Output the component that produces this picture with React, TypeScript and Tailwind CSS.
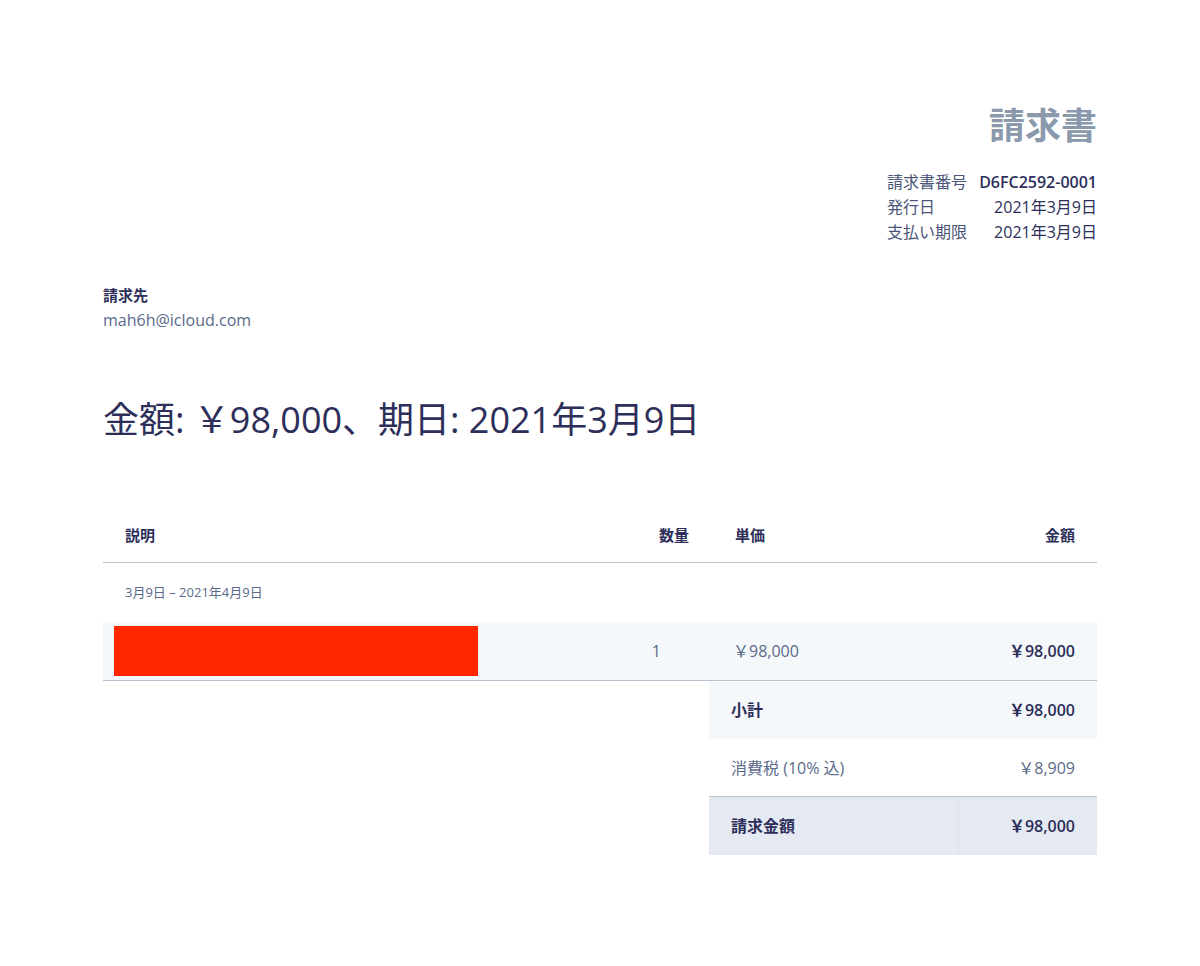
const font = { fontFamily: '"Open Sans", "Noto Sans CJK JP", sans-serif' };

export default function App() {
  return (
    <div className="w-[1200px] h-[966px] bg-white text-[#2d2f5a]" style={font}>
      <div className="px-[103px] pt-[100px] w-[1200px]">
        <div className="flex flex-col items-end">
          <div className="text-[36px] leading-[52px] font-semibold text-[#8a99ac]">請求書</div>
          <div className="mt-[18px] grid grid-cols-[auto_auto] gap-x-3 text-[16px] leading-[25px]">
            <span className="text-[#4a5578]">請求書番号</span>
            <span className="text-right font-semibold">D6FC2592-0001</span>
            <span className="text-[#4a5578]">発行日</span>
            <span className="text-right">2021年3月9日</span>
            <span className="text-[#4a5578]">支払い期限</span>
            <span className="text-right">2021年3月9日</span>
          </div>
        </div>

        <div className="mt-[38px]">
          <div className="text-[15px] leading-[24px] font-semibold">請求先</div>
          <div className="text-[16px] leading-[26px] text-[#5a6a8a]">mah6h@icloud.com</div>
        </div>

        <h1 className="mt-[62px] text-[36px] leading-[50px] text-[#2d2f5a]">金額: ￥98,000、期日: 2021年3月9日</h1>

        <div className="mt-[64px]">
          <div className="grid grid-cols-[1fr_109px_388px] h-[54px] items-center border-b border-[#b8c2cf] text-[15px] font-semibold">
            <span className="pl-[22px]">説明</span>
            <span className="text-right pr-[20px]">数量</span>
            <div className="flex justify-between pl-[26px] pr-[22px]">
              <span>単価</span>
              <span>金額</span>
            </div>
          </div>
          <div className="h-[59px] flex items-center pl-[22px] text-[13px] text-[#5a6a8a]">3月9日 – 2021年4月9日</div>
          <div className="grid grid-cols-[1fr_109px_388px] h-[59px] items-center bg-[#f5f8fb] border-b border-[#b8c2cf] text-[16px]">
            <div className="pl-[11px]">
              <div className="w-[364px] h-[50px] bg-[#ff2600]" />
            </div>
            <span className="pr-[48px] text-right text-[#5a6a8a]">1</span>
            <div className="flex justify-between pl-[24px] pr-[22px]">
              <span className="text-[#5a6a8a]">￥98,000</span>
              <span className="font-semibold">￥98,000</span>
            </div>
          </div>
          <div className="flex justify-end">
            <div className="w-[388px] text-[16px]">
              <div className="h-[58px] flex items-center justify-between bg-[#f5f8fb] pl-[22px] pr-[22px] font-semibold">
                <span>小計</span>
                <span>￥98,000</span>
              </div>
              <div className="h-[58px] flex items-center justify-between pl-[22px] pr-[22px] text-[#5a6a8a] border-b border-[#b8c2cf]">
                <span>消費税 (10% 込)</span>
                <span>￥8,909</span>
              </div>
              <div className="h-[58px] flex bg-[#e5e9f1] font-semibold">
                <div className="w-[250px] flex items-center pl-[22px] border-r border-[#dde2ea]">請求金額</div>
                <div className="flex-1 flex items-center justify-end pr-[22px]">￥98,000</div>
              </div>
            </div>
          </div>
        </div>
      </div>
    </div>
  );
}
